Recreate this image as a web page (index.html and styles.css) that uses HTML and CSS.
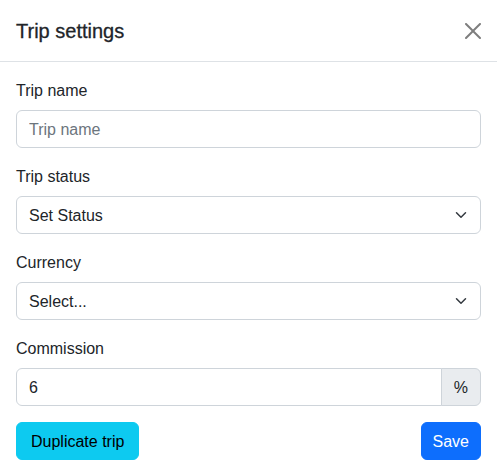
FILE: index.html
```html
<!DOCTYPE html>
<html lang="en">
<head>
<meta charset="utf-8">
<title>Trip settings</title>
<link rel="stylesheet" href="styles.css">
</head>
<body>
<div class="modal">
  <div class="modal-header">
    <h5 class="modal-title">Trip settings</h5>
    <button type="button" class="btn-close" aria-label="Close">
      <svg viewBox="0 0 16 16" width="16" height="16" aria-hidden="true"><path d="M.293.293a1 1 0 0 1 1.414 0L8 6.586 14.293.293a1 1 0 1 1 1.414 1.414L9.414 8l6.293 6.293a1 1 0 0 1-1.414 1.414L8 9.414l-6.293 6.293a1 1 0 0 1-1.414-1.414L6.586 8 .293 1.707a1 1 0 0 1 0-1.414z" fill="#000"/></svg>
    </button>
  </div>
  <div class="modal-body">
    <div class="field">
      <label class="form-label" for="name">Trip name</label>
      <input class="form-control" id="name" type="text" placeholder="Trip name">
    </div>
    <div class="field">
      <label class="form-label" for="status">Trip status</label>
      <div class="select-wrap">
        <select class="form-select" id="status"><option>Set Status</option></select>
        <svg class="chevron" viewBox="0 0 16 16" width="16" height="12" aria-hidden="true"><path fill="none" stroke="#343a40" stroke-linecap="round" stroke-linejoin="round" stroke-width="2" d="m2 5 6 6 6-6"/></svg>
      </div>
    </div>
    <div class="field">
      <label class="form-label" for="currency">Currency</label>
      <div class="select-wrap">
        <select class="form-select" id="currency"><option>Select...</option></select>
        <svg class="chevron" viewBox="0 0 16 16" width="16" height="12" aria-hidden="true"><path fill="none" stroke="#343a40" stroke-linecap="round" stroke-linejoin="round" stroke-width="2" d="m2 5 6 6 6-6"/></svg>
      </div>
    </div>
    <div class="field">
      <label class="form-label" for="commission">Commission</label>
      <div class="input-group">
        <input class="form-control group-input" id="commission" type="text" value="6">
        <span class="input-group-text">%</span>
      </div>
    </div>
    <div class="actions">
      <button type="button" class="btn btn-info">Duplicate trip</button>
      <button type="button" class="btn btn-primary">Save</button>
    </div>
  </div>
</div>
</body>
</html>
```
FILE: styles.css
```css
* { box-sizing: border-box; }
html, body { margin: 0; padding: 0; background: #fff; }
body {
  font-family: "Liberation Sans", Arial, sans-serif;
  font-size: 16px;
  line-height: 1.5;
  color: #212529;
}
.modal { width: 497px; height: 476px; background: #fff; }
.modal-header {
  display: flex;
  align-items: center;
  height: 62px;
  padding: 1px 16px 0;
  border-bottom: 1px solid #dee2e6;
}
.modal-title {
  margin: 0;
  font-size: 20px;
  font-weight: 500;
  line-height: 1.5;
  -webkit-text-stroke: 0.3px #212529;
}
.btn-close {
  margin-left: auto;
  margin-right: -8px;
  margin-top: -1px;
  width: 32px;
  height: 24px;
  padding: 4px 8px;
  border: 0;
  background: transparent;
  opacity: .5;
  display: flex;
  align-items: center;
  justify-content: center;
  cursor: pointer;
}
.btn-close svg { display: block; }
.modal-body { padding: 16px; }
.field { margin-bottom: 16px; }
.form-label { display: block; padding-top: 1px; margin-bottom: 7px; }
.form-control, .form-select {
  display: block;
  width: 100%;
  height: 38px;
  padding: 7px 12px 5px;
  font-family: inherit;
  font-size: 16px;
  line-height: 1.5;
  color: #212529;
  background: #fff;
  border: 1px solid #ced4da;
  border-radius: 6px;
  appearance: none;
  -webkit-appearance: none;
  outline: none;
}
.form-control::placeholder { color: #6c757d; opacity: 1; }
.form-select { padding-right: 36px; }
.select-wrap { position: relative; }
.chevron {
  position: absolute;
  right: 12px;
  top: 13px;
  pointer-events: none;
}
.input-group { display: flex; }
.group-input {
  flex: 1;
  border-top-right-radius: 0;
  border-bottom-right-radius: 0;
}
.input-group-text {
  display: flex;
  align-items: center;
  padding: 7px 12px 5px;
  margin-left: -1px;
  background: #e9ecef;
  border: 1px solid #ced4da;
  border-radius: 0 6px 6px 0;
  height: 38px;
}
.actions {
  display: flex;
  justify-content: space-between;
}
.btn {
  height: 38px;
  padding: 7px 12px 5px;
  font-family: inherit;
  font-size: 16px;
  line-height: 1.5;
  border: 1px solid transparent;
  border-radius: 6px;
  cursor: pointer;
}
.btn-info { background: #0dcaf0; border-color: #0dcaf0; color: #000; padding-left: 14px; padding-right: 14px; }
.btn-primary { background: #0d6efd; border-color: #0d6efd; color: #fff; padding-left: 11px; padding-right: 11px; }
```
